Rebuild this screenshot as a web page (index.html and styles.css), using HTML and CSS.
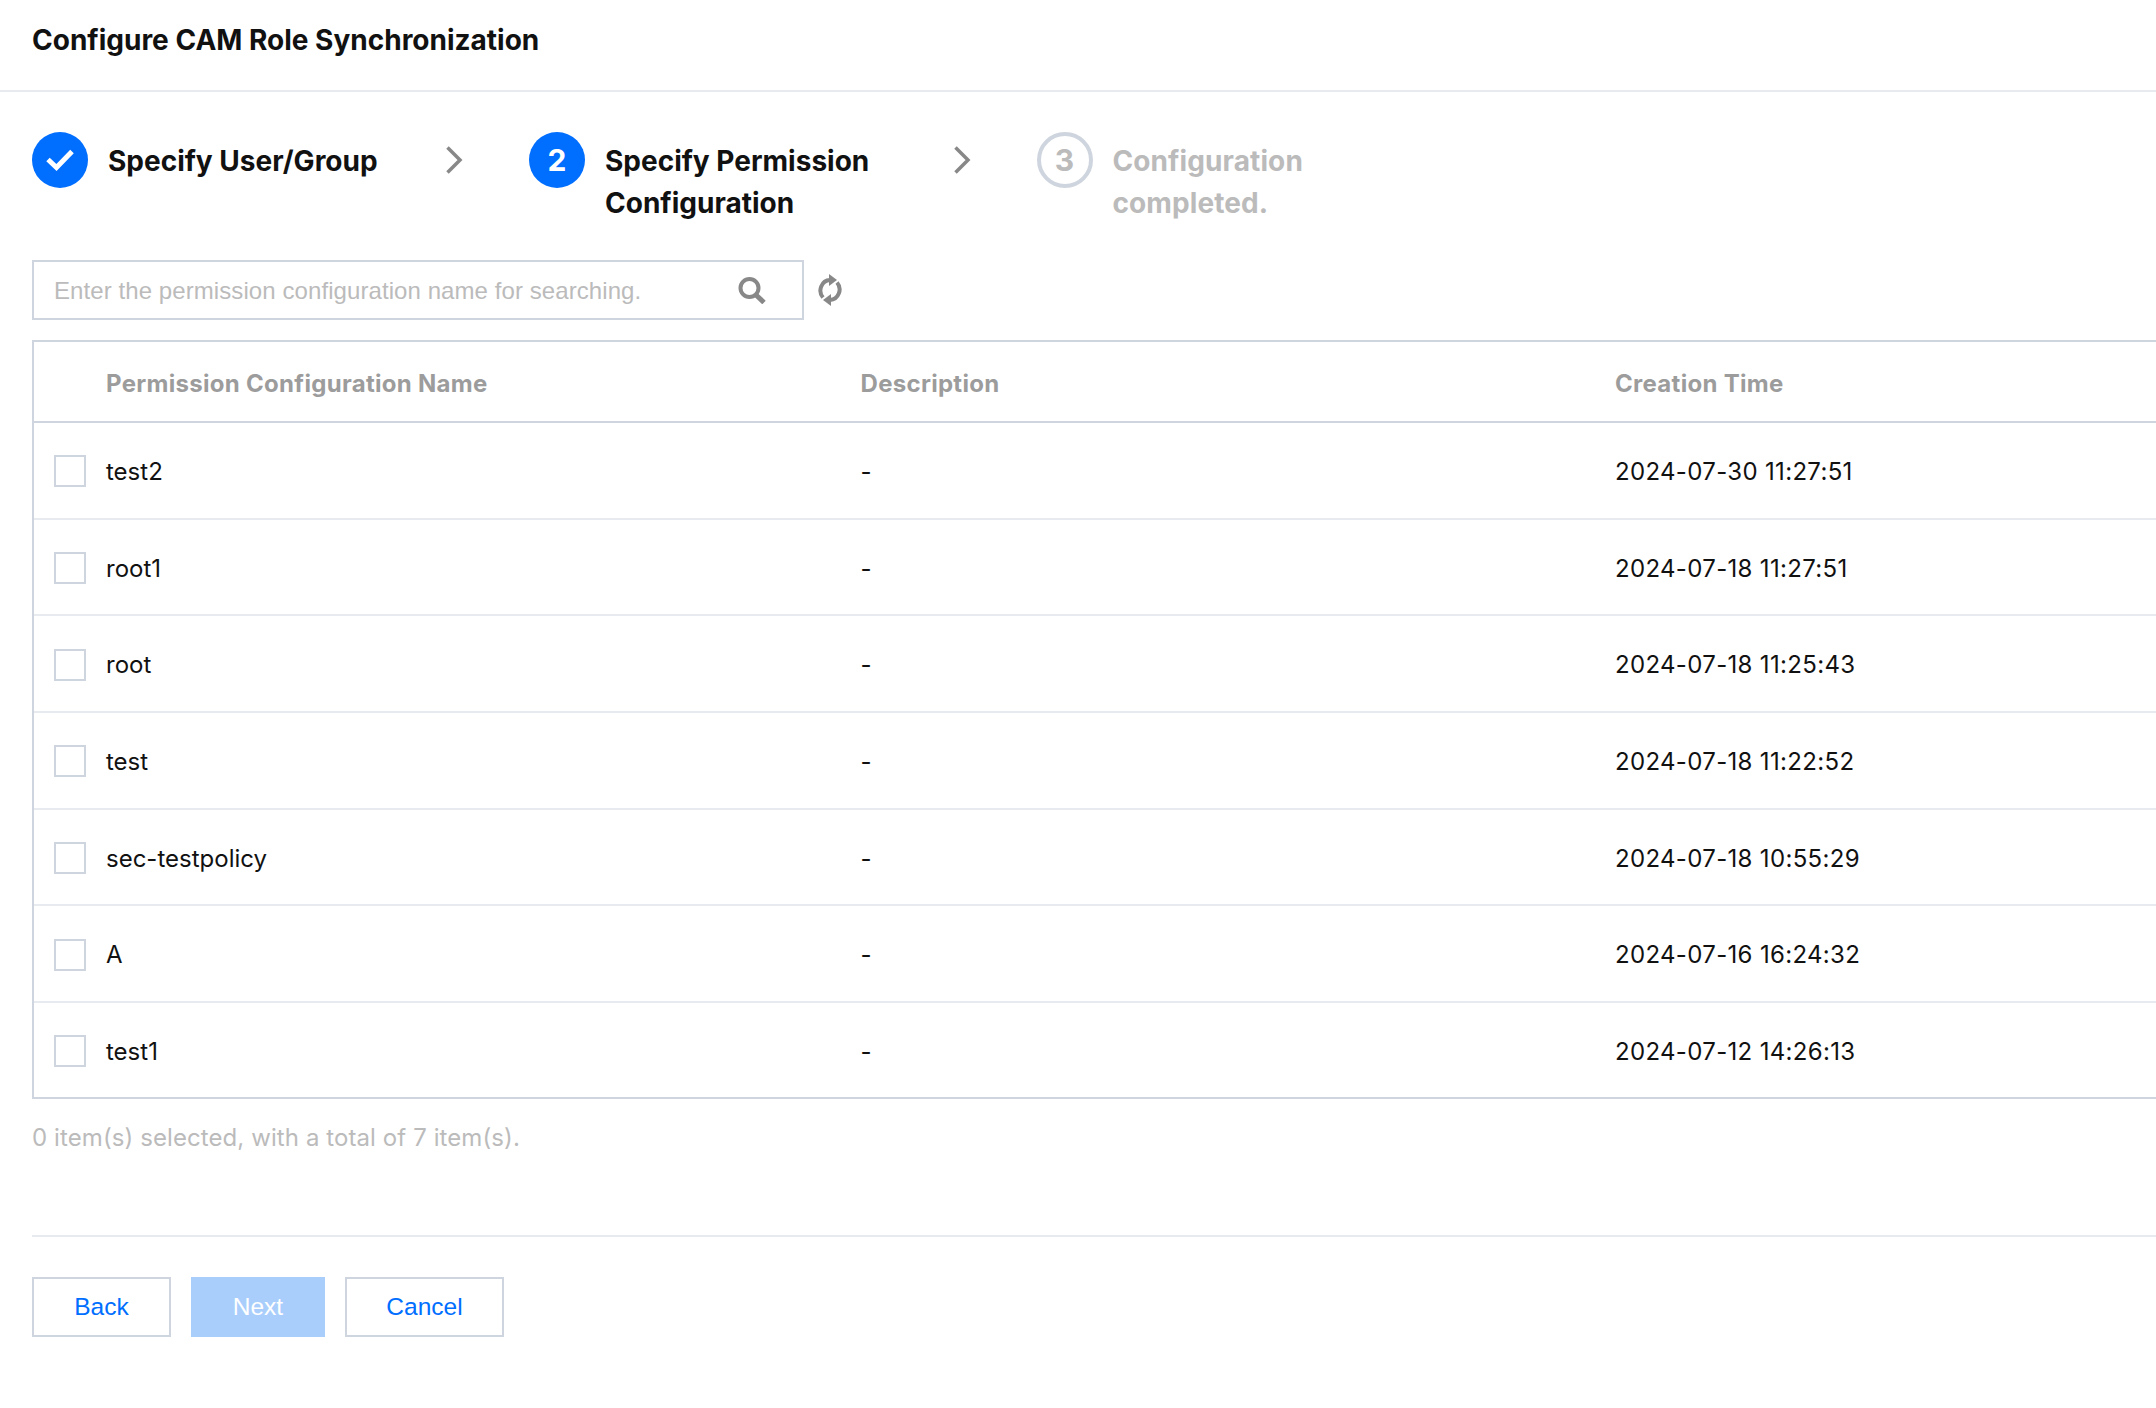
FILE: index.html
```html
<!DOCTYPE html>
<html lang="en">
<head>
  <meta charset="UTF-8">
  <title>Configure CAM Role Synchronization</title>
  <link rel="stylesheet" href="styles.css">
</head>
<body>

  <div class="page-head">
    <h2>Configure CAM Role Synchronization</h2>
  </div>

  <div class="content">
    <div class="steps">
      <div class="step done step-one">
        <span class="step-num">
          <svg width="30" height="24" viewBox="0 0 30 24"><path d="M3 11.500 L11.500 19.500 L27 3.500" fill="none" stroke="#fff" stroke-width="5"/></svg>
        </span>
        <span class="step-text">Specify User/Group</span>
      </div>
      <svg class="chevron" width="18" height="28" viewBox="0 0 18 28"><path d="M2.500 1.500 L15 14 L2.500 26.500" fill="none" stroke="#888" stroke-width="3.500"/></svg>
      <div class="step current step-two">
        <span class="step-num">2</span>
        <span class="step-text">Specify Permission Configuration</span>
      </div>
      <svg class="chevron" width="18" height="28" viewBox="0 0 18 28"><path d="M2.500 1.500 L15 14 L2.500 26.500" fill="none" stroke="#888" stroke-width="3.500"/></svg>
      <div class="step todo step-three">
        <span class="step-num">3</span>
        <span class="step-text">Configuration completed.</span>
      </div>
    </div>

    <div class="toolbar">
      <div class="search-box">
        <input type="text" placeholder="Enter the permission configuration name for searching.">
        <svg width="30" height="28" viewBox="0 0 30 28"><circle cx="12.500" cy="12" r="9" fill="none" stroke="#888" stroke-width="4"/><path d="M18.500 18.500 L27 26.500" stroke="#888" stroke-width="5"/></svg>
      </div>
      <svg class="refresh" width="26" height="32" viewBox="0 0 26 32">
        <path d="M6 23.500 A10 10.500 0 0 1 13 6" fill="none" stroke="#888" stroke-width="4"/>
        <path d="M12 0 L20 6 L12 12 Z" fill="#888"/>
        <path d="M20 8.500 A10 10.500 0 0 1 13 26" fill="none" stroke="#888" stroke-width="4"/>
        <path d="M14 20 L6 26 L14 32 Z" fill="#888"/>
      </svg>
    </div>

    <div class="table-wrap">
      <table class="data-table">
        <colgroup>
          <col class="col-check">
          <col class="col-text">
          <col class="col-text">
          <col class="col-text">
        </colgroup>
        <thead>
          <tr><th></th><th>Permission Configuration Name</th><th>Description</th><th>Creation Time</th></tr>
        </thead>
        <tbody>
          <tr><td><span class="check"></span></td><td>test2</td><td>-</td><td class="time">2024-07-30 11:27:51</td></tr>
          <tr><td><span class="check"></span></td><td>root1</td><td>-</td><td class="time">2024-07-18 11:27:51</td></tr>
          <tr><td><span class="check"></span></td><td>root</td><td>-</td><td class="time">2024-07-18 11:25:43</td></tr>
          <tr><td><span class="check"></span></td><td>test</td><td>-</td><td class="time">2024-07-18 11:22:52</td></tr>
          <tr><td><span class="check"></span></td><td>sec-testpolicy</td><td>-</td><td class="time">2024-07-18 10:55:29</td></tr>
          <tr><td><span class="check"></span></td><td>A</td><td>-</td><td class="time">2024-07-16 16:24:32</td></tr>
          <tr><td><span class="check"></span></td><td>test1</td><td>-</td><td class="time">2024-07-12 14:26:13</td></tr>
        </tbody>
      </table>
    </div>

    <div class="total">0 item(s) selected, with a total of 7 item(s).</div>

    <div class="actions">
      <button class="btn btn-back">Back</button>
      <button class="btn btn-next" disabled>Next</button>
      <button class="btn btn-cancel">Cancel</button>
    </div>
  </div>

</body>
</html>
```

FILE: styles.css
```css
* {
  margin: 0;
  padding: 0;
  box-sizing: border-box;
  font-family: 'Inter', 'Liberation Sans', sans-serif;
}

html, body {
  height: 100%;
  overflow: hidden;
}

body {
  background: white;
  color: #111;
}

.page-head {
  height: 92px;
  padding: 22px 32px 0;
  border-bottom: 2px solid #e7eaef;
}

.page-head h2 {
  font-size: 28px;
  line-height: 36px;
  font-weight: 700;
}

.content {
  padding: 40px 0 0 32px;
}

.steps {
  display: flex;
  align-items: flex-start;
  height: 128px;
}

.step {
  display: flex;
  align-items: flex-start;
}

.step-num {
  flex: none;
  width: 56px;
  height: 56px;
  margin-right: 20px;
  border-radius: 50%;
  display: flex;
  justify-content: center;
  align-items: center;
  font-size: 30px;
  font-weight: 700;
  background: #006eff;
  color: white;
}

.step-text {
  font-size: 28px;
  line-height: 42px;
  font-weight: 700;
  padding-top: 8px;
}

.step-one .step-text { width: 269px; white-space: nowrap; }
.step-two .step-text { width: 283.500px; }
.step-three .step-text { width: 210px; }

.chevron {
  flex: none;
  margin: 14px 66px 0 68px;
}

.step-two + .chevron {
  margin-left: 64px;
  margin-right: 66px;
}

.step.todo .step-num {
  background: white;
  border: 4px solid #cfd5de;
  color: #bbb;
}

.step.todo .step-text {
  letter-spacing: 0.100px;
  color: #bbb;
}

.toolbar {
  display: flex;
  align-items: center;
  gap: 13px;
}

.search-box {
  width: 772px;
  height: 60px;
  border: 2px solid #cfd5de;
  display: flex;
  align-items: center;
  padding: 0 35px 0 20px;
}

.search-box input {
  flex: 1;
  min-width: 0;
  border: none;
  outline: none;
  padding-top: 1px;
  font-family: 'Liberation Sans', sans-serif;
  font-size: 24px;
  letter-spacing: 0.080px;
  color: #111;
}

.search-box input::placeholder {
  color: #bbb;
}

.table-wrap {
  margin-top: 20px;
  width: 2300px;
  border: 2px solid #cfd5de;
  border-right: none;
}

.data-table {
  width: 100%;
  table-layout: fixed;
  border-collapse: separate;
  border-spacing: 0;
}

.col-check {
  width: 54px;
}

.col-text {
  width: 754.500px;
}

.data-table th {
  height: 81px;
  padding: 4px 0 0 18px;
  text-align: left;
  font-size: 24px;
  font-weight: 700;
  letter-spacing: 0.300px;
  color: #9c9c9c;
  border-bottom: 2px solid #cfd5de;
}

.data-table td {
  height: 96.700px;
  padding: 2px 0 0 18px;
  font-size: 24px;
  border-bottom: 2px solid #e7eaef;
}

.data-table td:first-child {
  padding-left: 20px;
}

.data-table td.time {
  letter-spacing: 0.330px;
}

.data-table tbody tr:last-child td {
  height: 94px;
  border-bottom: none;
}

.check {
  display: block;
  width: 32px;
  height: 32px;
  background: white;
  border: 2px solid #cfd5de;
}

.total {
  margin-top: 23px;
  font-size: 24px;
  line-height: 32px;
  letter-spacing: 0.090px;
  color: #bbb;
}

.actions {
  display: flex;
  gap: 20px;
  margin-top: 81px;
  padding-top: 40px;
  border-top: 2px solid #e7eaef;
}

.btn {
  height: 60px;
  font-family: 'Liberation Sans', sans-serif;
  font-size: 24.500px;
  background: white;
  color: #006eff;
  border: 2px solid #cfd5de;
  cursor: pointer;
}

.btn-back { width: 139px; }
.btn-cancel { width: 159px; }

.btn-next {
  width: 134px;
  background: #a9cefc;
  border-color: #a9cefc;
  color: white;
  cursor: not-allowed;
}
```
